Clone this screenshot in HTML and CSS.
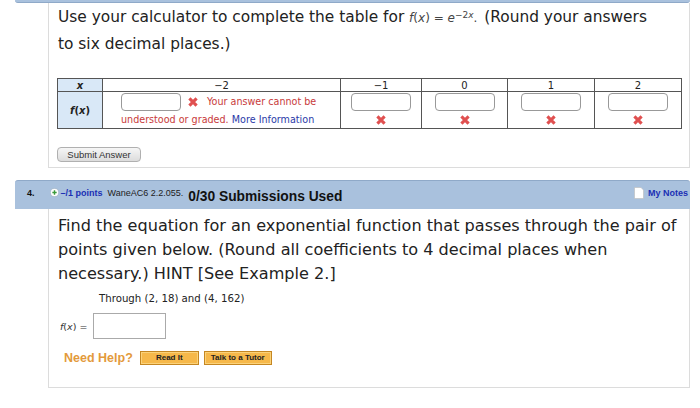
FILE: index.html
```html
<!DOCTYPE html>
<html>
<head>
<meta charset="utf-8">
<link rel="stylesheet" href="styles.css">
</head>
<body>
<div class="prev-bar"></div>
<div class="panel panel-top">
  <p class="qtext">Use your calculator to complete the table for <span class="math"><i>f</i>(<i>x</i>) = <i>e</i><sup>−2<i>x</i></sup>.</span> (Round your answers<br>to six decimal places.)</p>
  <table class="grid">
    <tr class="hrow">
      <th class="lab"><i>x</i></th>
      <td class="c1">−2</td>
      <td class="c2">−1</td>
      <td class="c3">0</td>
      <td class="c4">1</td>
      <td class="c5">2</td>
    </tr>
    <tr class="brow">
      <th class="lab"><i>f</i>(<i>x</i>)</th>
      <td class="c1 err">
        <div class="errline"><span class="box"></span><svg class="xm" viewBox="0 0 10 10"><path d="M2 2L8 8M8 2L2 8"/></svg><span class="msg">Your answer cannot be</span></div>
        <div class="errline2"><span class="msg">understood or graded.</span> <span class="more">More Information</span></div>
      </td>
      <td class="c2"><span class="box"></span><svg class="xm" viewBox="0 0 10 10"><path d="M2 2L8 8M8 2L2 8"/></svg></td>
      <td class="c3"><span class="box"></span><svg class="xm" viewBox="0 0 10 10"><path d="M2 2L8 8M8 2L2 8"/></svg></td>
      <td class="c4"><span class="box"></span><svg class="xm" viewBox="0 0 10 10"><path d="M2 2L8 8M8 2L2 8"/></svg></td>
      <td class="c5"><span class="box"></span><svg class="xm" viewBox="0 0 10 10"><path d="M2 2L8 8M8 2L2 8"/></svg></td>
    </tr>
  </table>
  <div class="submit-row"><span class="submit">Submit Answer</span></div>
</div>

<div class="qbar">
  <span class="qnum">4.</span>
  <svg class="plus" viewBox="0 0 10 10"><circle cx="5" cy="5" r="4.5" fill="#fff" stroke="#9ab" stroke-width="0.6"/><path d="M5 2.6V7.4M2.6 5H7.4" stroke="#3a9a3a" stroke-width="1.6"/></svg>
  <span class="pts">–/1 points</span>
  <span class="code">WaneAC6 2.2.055.</span>
  <span class="subs">0/30 Submissions Used</span>
  <span class="notes"><svg class="note" viewBox="0 0 10 12"><path d="M0.5 0.5H7L9.5 3V11.5H0.5Z" fill="#fff" stroke="#bbb" stroke-width="0.6"/></svg>My Notes</span>
</div>
<div class="panel panel-bot">
  <p class="qtext2">Find the equation for an exponential function that passes through the pair of points given below. (Round all coefficients to 4 decimal places when necessary.) HINT [See Example 2.]</p>
  <p class="through">Through (2, 18) and (4, 162)</p>
  <div class="fxrow"><span class="fx"><i>f</i>(<i>x</i>) =</span><span class="ansbox"></span></div>
  <div class="helprow"><span class="need">Need Help?</span><span class="hbtn b1">Read It</span><span class="hbtn b2">Talk to a Tutor</span></div>
</div>
</body>
</html>
```
FILE: styles.css
```css
html, body { margin: 0; padding: 0; background: #fff; }
body { width: 700px; height: 408px; overflow: hidden; font-family: "DejaVu Sans", Verdana, sans-serif; color: #222; }

.prev-bar { margin-left: 15px; width: 675px; height: 3px; background: #a9c1dd; border-bottom: 1px solid #8fa9c8; border-radius: 0 0 3px 3px; box-sizing: border-box; }

.panel { margin-left: 48px; width: 642px; box-sizing: border-box; border: 1px solid #dcdcdc; border-top: none; background: #fff; }

.panel-top { height: 165px; padding: 1px 0 0 9px; }
.qtext { margin: 0; font-size: 15.4px; line-height: 26px; color: #222; width: 625px; }
.math { font-family: "DejaVu Sans", sans-serif; font-size: 12px; color: #444; margin: 0 2px 0 0; }
.math sup { font-size: 9px; vertical-align: 4px; line-height: 0; }

.grid { margin-top: 21px; margin-left: -1px; border-collapse: collapse; table-layout: fixed; width: 624px; font-size: 10px; color: #222; }
.grid th, .grid td { border: 1px solid #555; padding: 0; text-align: center; }
.grid .lab { width: 44px; background: #d9e8f7; font-weight: bold; font-size: 10px; }
.hrow td, .hrow th { height: 12px; line-height: 11px; }
.brow td, .brow th { height: 36px; }
.c1 { width: 237px; }
.c2 { width: 80px; }
.c3 { width: 85px; }
.c4 { width: 86px; }
.c5 { width: 86px; }
.brow td { vertical-align: top; }
.box { display: block; width: 58px; height: 16px; border: 1px solid #999; border-radius: 4px; margin: 1px auto 0; background: #fff; }
.xm { display: block; width: 12px; height: 12px; margin: 3px auto 0; fill: none; stroke: #e05050; stroke-width: 2.6; }
.err { text-align: left !important; padding-left: 18px !important; }
.errline { display: flex; align-items: center; }
.errline .box { margin: 1px 0 0 0; }
.errline .xm { margin: 0 0 0 6px; }
.errline .msg { margin-left: 8px; }
.msg { color: #c83a3a; font-size: 9.6px; }
.more { color: #2a3aa8; font-size: 9.6px; }
.errline2 { margin-top: 3px; line-height: 12px; }

.submit-row { margin-top: 14px; }
.submit { display: inline-block; margin-left: -1px; width: 82px; height: 13px; line-height: 13px; text-align: center; border: 1px solid #b0b0b0; border-radius: 4px; background: linear-gradient(#f6f6f6, #dcdcdc); font-family: "Liberation Sans", Arial, sans-serif; font-size: 9.5px; color: #333; }

.qbar { margin-top: 12px; margin-left: 15px; width: 675px; height: 29px; box-sizing: border-box; background: #a9c1dd; border-top: 1px solid #8fa9c8; border-radius: 3px 3px 0 0; display: flex; align-items: flex-start; font-family: "Liberation Sans", Arial, sans-serif; }
.qnum { font-size: 9px; font-weight: bold; margin: 7px 0 0 12px; color: #111; }
.plus { width: 9px; height: 9px; margin: 7px 0 0 15px; }
.pts { font-size: 9px; font-weight: bold; color: #1b2fb4; margin: 7px 0 0 2px; }
.code { font-size: 9px; color: #222; margin: 7px 0 0 5px; }
.subs { font-size: 13.8px; font-weight: bold; color: #111; margin: 8px 0 0 5px; }
.notes { margin-left: auto; margin-right: 2px; margin-top: 6px; font-size: 9px; font-weight: bold; color: #1b2fb4; display: flex; align-items: center; }
.note { width: 10px; height: 12px; margin-right: 4px; }

.panel-bot { height: 179px; padding: 5px 0 0 9px; }
.qtext2 { margin: 0; font-size: 16.1px; line-height: 24px; color: #222; width: 628px; }
.through { margin: 6px 0 0 41px; font-size: 10.2px; line-height: 14px; color: #222; }
.fxrow { display: flex; align-items: center; margin-top: 7px; margin-left: 2px; }
.fx { font-size: 9.5px; color: #333; width: 33px; }
.ansbox { display: block; width: 71px; height: 24px; border: 1px solid #aaa; background: #fff; }
.helprow { display: flex; align-items: center; margin-top: 12px; margin-left: 6px; font-family: "Liberation Sans", Arial, sans-serif; }
.need { font-size: 12.5px; font-weight: bold; color: #e39a3b; }
.hbtn { display: inline-block; height: 12px; line-height: 12px; text-align: center; font-size: 8px; font-weight: bold; color: #222; background: #f6b84a; border: 1px solid #c58722; box-shadow: inset 0 0 0 1px #fbd27a; }
.b1 { width: 57px; margin-left: 7px; }
.b2 { width: 66px; margin-left: 5px; }
```
